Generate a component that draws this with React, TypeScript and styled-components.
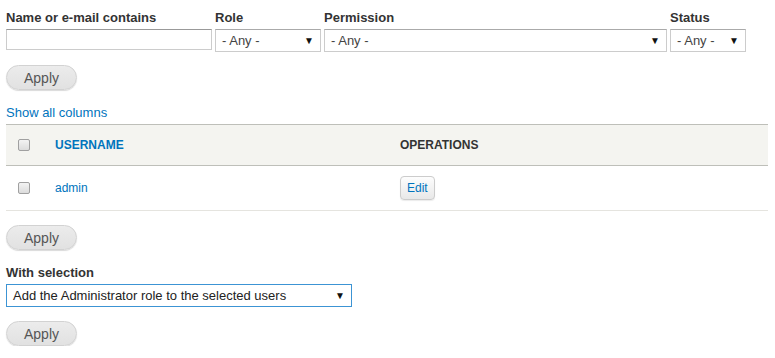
import styled, { createGlobalStyle } from 'styled-components';

const GlobalStyle = createGlobalStyle`
  * { box-sizing: border-box; }
  body {
    margin: 0;
    background: #fff;
    font-family: 'Liberation Sans', Arial, sans-serif;
    color: #333;
  }
`;

const Page = styled.div`
  padding: 10px 7px 0 6px;
`;

const Filters = styled.div`
  display: flex;
  align-items: flex-start;
  gap: 3px;
`;

const Field = styled.div<{ $width: number }>`
  display: flex;
  flex-direction: column;
  width: ${(p) => p.$width}px;
`;

const Label = styled.label`
  font-size: 13px;
  font-weight: bold;
  line-height: 16px;
  color: #333;
  margin-bottom: 3px;
`;

const TextInput = styled.input`
  width: 100%;
  height: 21px;
  border: 1px solid #ccc;
  border-top-color: #999;
  padding: 2px 4px;
  font: 13px 'Liberation Sans', Arial, sans-serif;
`;

const SelectBox = styled.div<{ $focus?: boolean }>`
  width: 100%;
  height: 23px;
  display: flex;
  align-items: center;
  justify-content: space-between;
  padding: 0 6px;
  border: 1px solid ${(p) => (p.$focus ? '#3c94d4' : '#ccc')};
  border-top-color: ${(p) => (p.$focus ? '#3c94d4' : '#aaa')};
  background: #fff;
  font-size: 13px;
  color: ${(p) => (p.$focus ? '#222' : '#444')};
  cursor: default;
`;

const Arrow = styled.span`
  font-size: 10px;
  color: #111;
  line-height: 1;
`;

const Button = styled.button`
  display: block;
  height: 25px;
  padding: 0 17px;
  border: 1px solid #d2d2d2;
  border-radius: 13px;
  background: linear-gradient(#ececec, #e1e1e1);
  box-shadow: 0 1px 1px rgba(0, 0, 0, 0.15);
  font: 14px 'Liberation Sans', Arial, sans-serif;
  color: #555;
`;

const Section = styled.div<{ $top: number }>`
  margin-top: ${(p) => p.$top}px;
`;

const Link = styled.a`
  color: #0074bd;
  text-decoration: none;
  font-size: 13px;
  line-height: 16px;
  display: block;
`;

const Table = styled.table`
  width: 100%;
  border-collapse: collapse;
  margin-top: 3px;
  font-size: 12px;
`;

const HeadRow = styled.tr`
  background: #f4f4f0;
  border-top: 1px solid #bebfb9;
  border-bottom: 1px solid #bebfb9;
  height: 41px;
`;

const BodyRow = styled.tr`
  border-bottom: 1px solid #e5e4df;
  height: 45px;
`;

const Th = styled.th<{ $link?: boolean; $width?: number }>`
  text-align: left;
  font-weight: bold;
  text-transform: uppercase;
  color: ${(p) => (p.$link ? '#0074bd' : '#333')};
  padding: 0;
  width: ${(p) => (p.$width ? `${p.$width}px` : 'auto')};
`;

const Td = styled.td`
  padding: 0;
  color: #0074bd;
`;

const CheckCell = styled.div`
  padding-left: 12px;
  display: flex;
  align-items: center;
`;

const Check = styled.span`
  display: inline-block;
  width: 12px;
  height: 12px;
  border: 1px solid #a0a0a0;
  border-radius: 2px;
  background: linear-gradient(#f3f3f3, #dcdcdc);
`;

const EditButton = styled.button`
  height: 24px;
  padding: 0 6px;
  border: 1px solid #ccc;
  border-radius: 4px;
  background: linear-gradient(#fdfdfd, #e8e8e8);
  box-shadow: 0 1px 1px rgba(0, 0, 0, 0.08);
  font: 12px 'Liberation Sans', Arial, sans-serif;
  color: #0074bd;
`;

export default function App() {
  return (
    <Page>
      <GlobalStyle />
      <Filters>
        <Field $width={206}>
          <Label>Name or e-mail contains</Label>
          <TextInput />
        </Field>
        <Field $width={106}>
          <Label>Role</Label>
          <SelectBox>
            <span>- Any -</span>
            <Arrow>▼</Arrow>
          </SelectBox>
        </Field>
        <Field $width={343}>
          <Label>Permission</Label>
          <SelectBox>
            <span>- Any -</span>
            <Arrow>▼</Arrow>
          </SelectBox>
        </Field>
        <Field $width={76}>
          <Label>Status</Label>
          <SelectBox>
            <span>- Any -</span>
            <Arrow>▼</Arrow>
          </SelectBox>
        </Field>
      </Filters>

      <Section $top={13}>
        <Button>Apply</Button>
      </Section>

      <Section $top={15}>
        <Link href="#">Show all columns</Link>
        <Table>
          <thead>
            <HeadRow>
              <Th $width={49}>
                <CheckCell>
                  <Check />
                </CheckCell>
              </Th>
              <Th $link $width={345}>Username</Th>
              <Th>Operations</Th>
            </HeadRow>
          </thead>
          <tbody>
            <BodyRow>
              <Td>
                <CheckCell>
                  <Check />
                </CheckCell>
              </Td>
              <Td>admin</Td>
              <Td>
                <EditButton>Edit</EditButton>
              </Td>
            </BodyRow>
          </tbody>
        </Table>
      </Section>

      <Section $top={14}>
        <Button>Apply</Button>
      </Section>

      <Section $top={15}>
        <Label as="div">With selection</Label>
        <Field $width={346}>
          <SelectBox $focus>
            <span>Add the Administrator role to the selected users</span>
            <Arrow>▼</Arrow>
          </SelectBox>
        </Field>
      </Section>

      <Section $top={14}>
        <Button>Apply</Button>
      </Section>
    </Page>
  );
}
